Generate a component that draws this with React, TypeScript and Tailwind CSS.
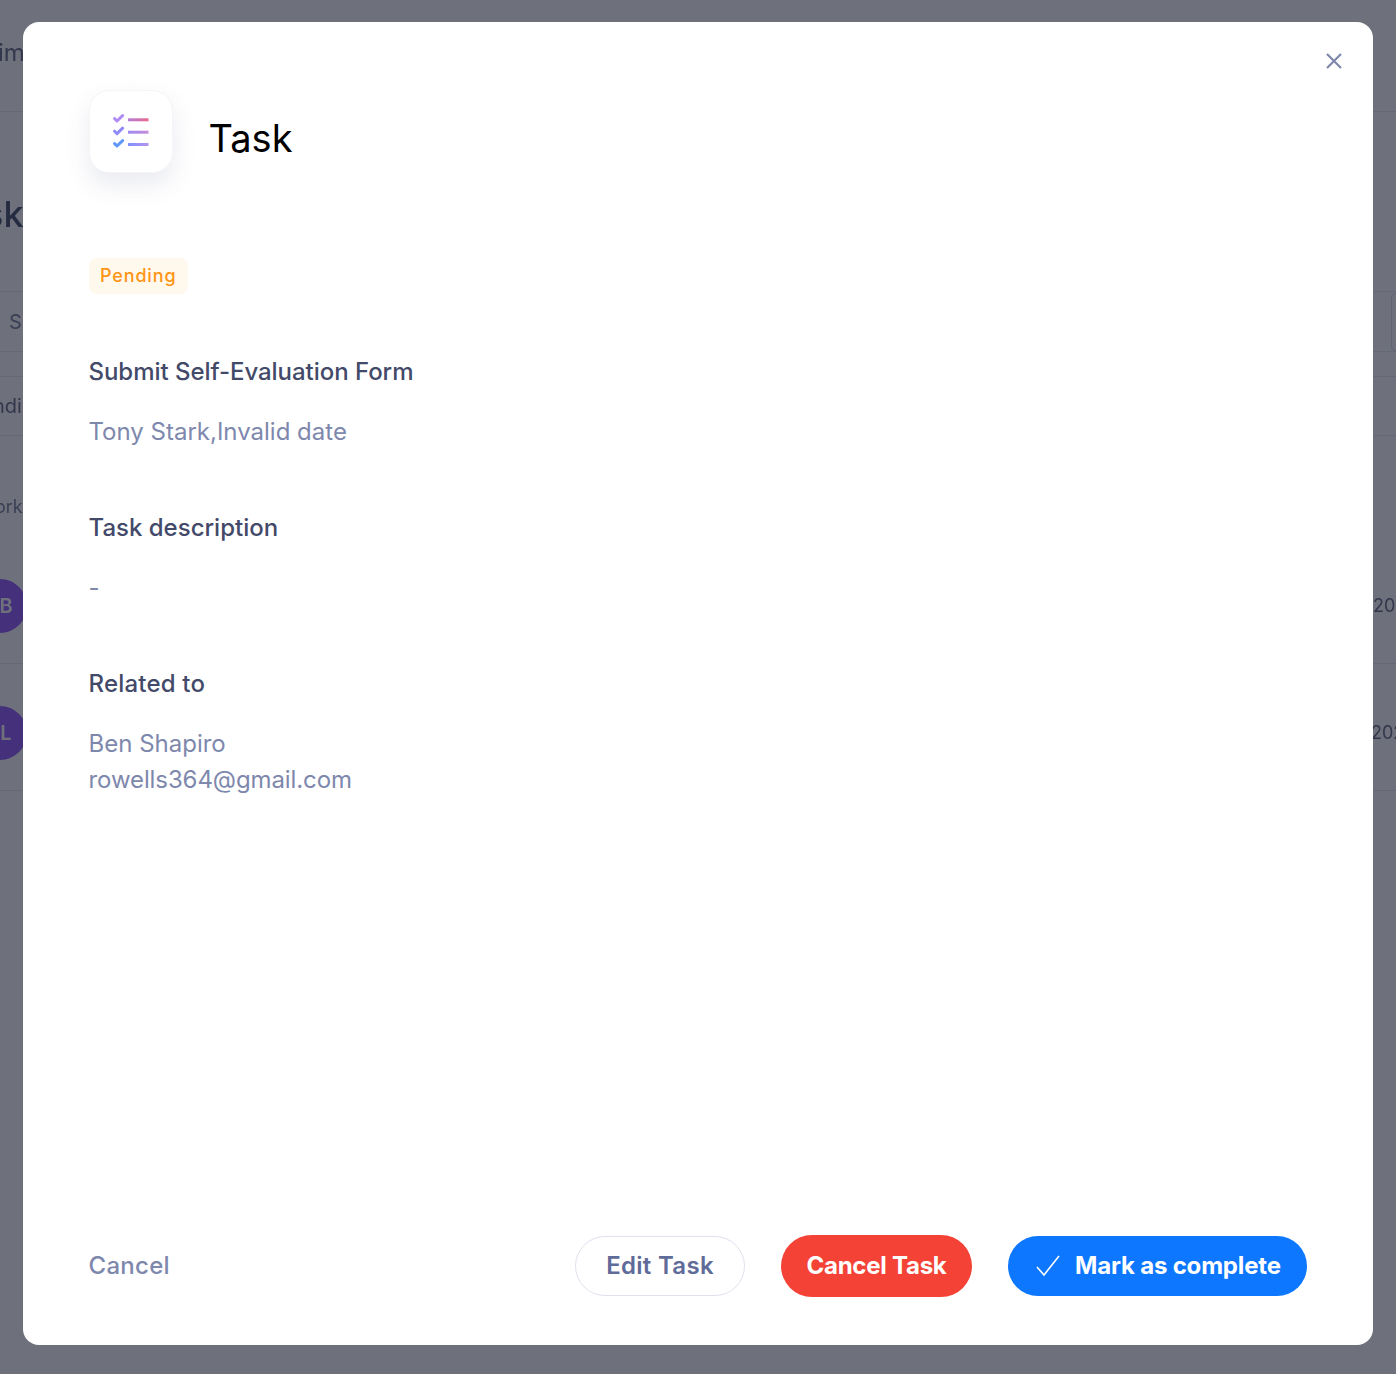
const FONT = "font-['Inter','Liberation_Sans',sans-serif]";

/* Rows of the page that sits behind the dialog; only their edges stay visible. */
function BackgroundPage() {
  return (
    <div className="h-[1374px] w-full overflow-hidden bg-white text-[#2e3a59] blur-[0.6px]">
      <div className="flex h-[112px] items-end border-b border-[#e4e7ee] pb-[40px] text-[24px] leading-[36px] text-[#454f6b]">
        <span className="-ml-[2px]">im</span>
      </div>
      <div className="flex h-[180px] items-end border-b border-[#e4e7ee] pb-[55px]">
        <span className="-ml-[16px] text-[36px] font-medium leading-[44px] text-[#1e2a4a]">sk</span>
      </div>
      <div className="flex h-[60px] items-center justify-between border-b border-[#e4e7ee]">
        <span className="ml-[9px] text-[20px] text-[#5b6685]">S</span>
        <div className="-mr-[5px] h-[58px] w-[10px] rounded-[8px] border border-[#d5d9e4]" />
      </div>
      <div className="mt-[24px] flex h-[60px] items-center border-y border-[#e4e7ee]">
        <span className="-ml-[7px] text-[20px] text-[#454f6b]">ndi</span>
      </div>
      <div className="flex h-[101px] items-start pt-[57px]">
        <span className="-ml-[5px] text-[18px] leading-[28px] text-[#5b6685]">ork</span>
      </div>
      <BackgroundRow letter="B" year="20" yearClass="ml-[1373px]" />
      <BackgroundRow letter="L" year="202" yearClass="ml-[1371px]" />
    </div>
  );
}

function BackgroundRow({ letter, year, yearClass }: { letter: string; year: string; yearClass: string }) {
  return (
    <div className="relative flex h-[127px] items-center border-b border-[#e4e7ee] pt-[11px]">
      <div className="absolute -left-[27px] flex h-[54px] w-[54px] items-center justify-center rounded-full bg-[#7c3aff]">
        <span className="ml-[12px] text-[20px] font-semibold text-white">{letter}</span>
      </div>
      <span className={`${yearClass} text-[18px] whitespace-nowrap text-[#454f6b]`}>{year}</span>
    </div>
  );
}

function TaskListIcon() {
  return (
    <svg width="36" height="36" viewBox="0 0 36 36" fill="none" strokeWidth="3" strokeLinejoin="round">
      <defs>
        <linearGradient id="line1" x1="15" y1="0" x2="36" y2="0" gradientUnits="userSpaceOnUse">
          <stop stopColor="#b57bd8" />
          <stop offset="1" stopColor="#e8688c" />
        </linearGradient>
        <linearGradient id="line2" x1="15" y1="0" x2="36" y2="0" gradientUnits="userSpaceOnUse">
          <stop stopColor="#9d8cf5" />
          <stop offset="1" stopColor="#c98bd8" />
        </linearGradient>
        <linearGradient id="line3" x1="15" y1="0" x2="36" y2="0" gradientUnits="userSpaceOnUse">
          <stop stopColor="#7f93fb" />
          <stop offset="1" stopColor="#b693f0" />
        </linearGradient>
      </defs>
      <path d="M1.6 4.6 L4 7 L9.6 1.6" stroke="#b08cf5" strokeLinecap="round" />
      <path d="M1.6 17.2 L4 19.6 L9.6 14.2" stroke="#8f8cf8" strokeLinecap="round" />
      <path d="M1.6 29.6 L4 32 L9.6 26.6" stroke="#5f98fb" strokeLinecap="round" />
      <path d="M15 5.8 H35.5" stroke="url(#line1)" />
      <path d="M15 18.2 H35.5" stroke="url(#line2)" />
      <path d="M15 30.5 H35.5" stroke="url(#line3)" />
    </svg>
  );
}

function Section({
  title,
  titleClass = "",
  children,
  className = "",
}: {
  title: string;
  titleClass?: string;
  children: React.ReactNode;
  className?: string;
}) {
  return (
    <div className={className}>
      <h3 className={`text-[24px] leading-[36px] font-[450] text-[#434a69] ${titleClass}`}>{title}</h3>
      <div className="mt-[24px] text-[24px] leading-[36px] text-[#7e88ad]">{children}</div>
    </div>
  );
}

export default function App() {
  return (
    <div className={`relative h-[1374px] w-full overflow-hidden ${FONT}`}>
      <BackgroundPage />
      <div className="absolute inset-0 bg-[#2a2c3d]/68" />

      <div className="absolute left-[23px] top-[22px] flex h-[1323px] w-[1350px] flex-col rounded-[16px] bg-white pt-[68px] pr-[66px] pb-[48px] pl-[65.5px]">
        <button className="absolute right-[26px] top-[26px] text-[#7e88ad]">
          <svg width="26" height="26" viewBox="0 0 26 26" fill="none" stroke="currentColor" strokeWidth="2.2">
            <path d="M6 6 L20 20 M20 6 L6 20" />
          </svg>
        </button>

        <div className="ml-[0.5px] flex items-center gap-[36px]">
          <div className="flex h-[83px] w-[84px] items-center justify-center rounded-[20px] border border-[#f4f5f8] bg-white shadow-[0_12px_24px_rgba(80,90,130,0.12)]">
            <TaskListIcon />
          </div>
          <h2 className="mt-[12px] -translate-x-[0.5px] text-[38px] leading-[48px] text-black">Task</h2>
        </div>

        <div className="mt-[85px] ml-[0.5px] w-fit rounded-[8px] bg-[#fff8ec] py-[6px] pr-[12px] pl-[11px] text-[18px] leading-[24px] font-medium tracking-[0.85px] text-[#ff9514]">
          Pending
        </div>

        <Section title="Submit Self-Evaluation Form" titleClass="tracking-[-0.04px]" className="mt-[60px]">
          Tony Stark,Invalid date
        </Section>
        <Section title="Task description" className="mt-[60px]">
          -
        </Section>
        <Section title="Related to" titleClass="tracking-[0.2px]" className="mt-[60px]">
          <div>Ben Shapiro</div>
          <div className="tracking-[-0.1px]">rowells364@gmail.com</div>
        </Section>

        <div className="mt-auto flex items-center">
          <span className="text-[24px] font-medium tracking-[0.3px] text-[#7e88ad]">Cancel</span>
          <div className="ml-auto flex items-center gap-[36px]">
            <button className="h-[60px] w-[170px] rounded-full border border-[#dfe1ee] bg-white text-[24px] font-semibold tracking-[0.3px] text-[#5f6b99]">
              Edit Task
            </button>
            <button className="h-[62px] w-[191px] rounded-full bg-[#f44336] text-[24px] font-bold tracking-[-0.25px] text-white">
              Cancel Task
            </button>
            <button className="flex h-[60px] w-[299px] items-center gap-[15px] rounded-full bg-[#0d77ff] pl-[28px] text-[24px] font-bold tracking-[-0.18px] text-white">
              <svg width="24" height="22" viewBox="0 0 24 22" fill="none" stroke="currentColor" strokeWidth="1.6">
                <path d="M1 12 L8 20 L23 1" />
              </svg>
              Mark as complete
            </button>
          </div>
        </div>
      </div>
    </div>
  );
}
